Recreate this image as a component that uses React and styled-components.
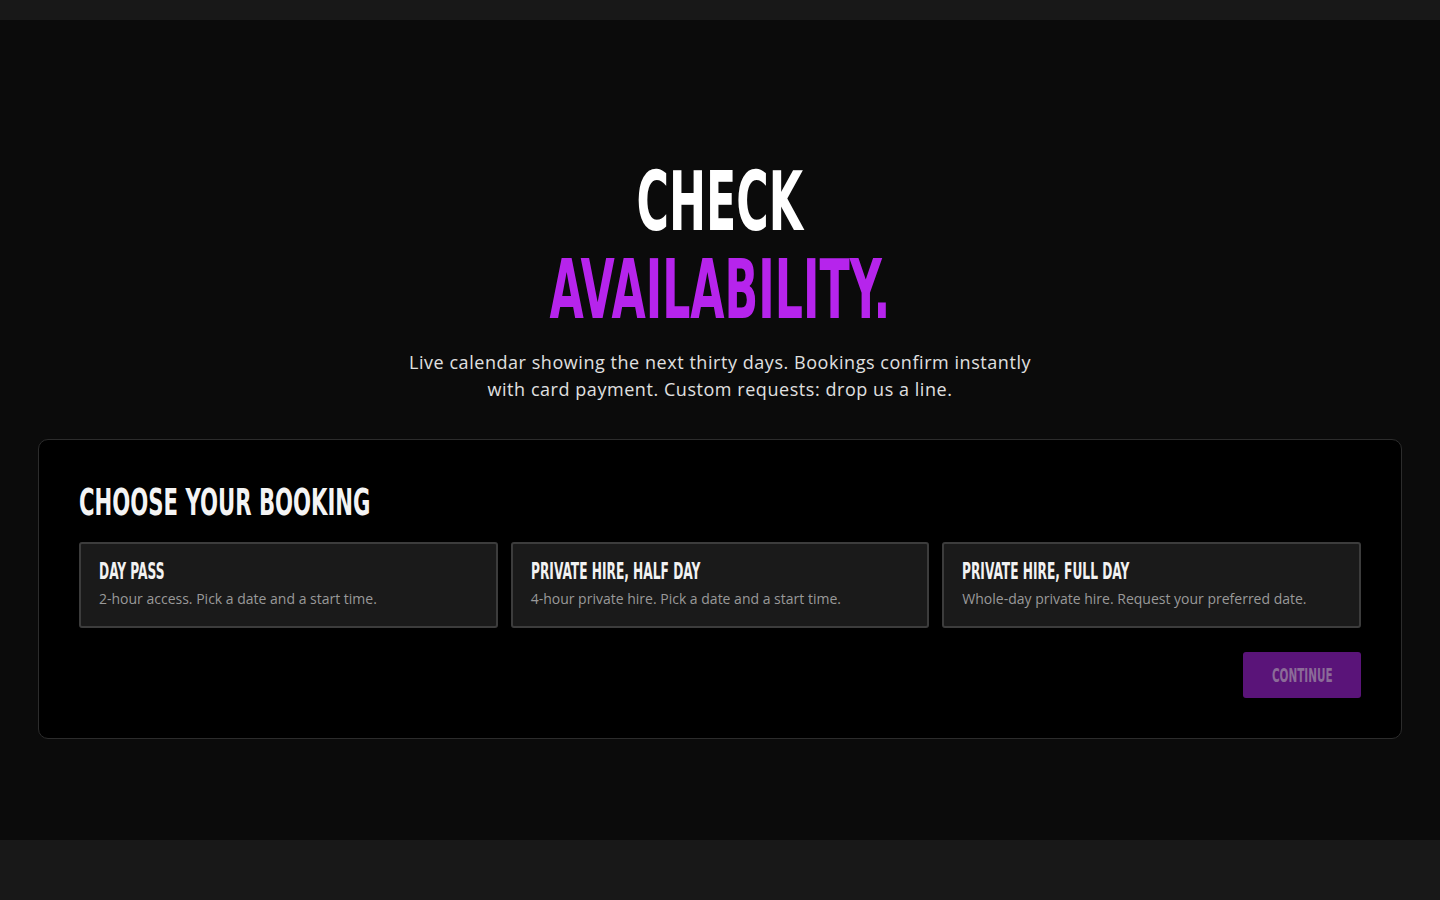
import styled, { createGlobalStyle } from "styled-components";

const Global = createGlobalStyle`
    html, body {
        margin: 0;
        padding: 0;
        background-color: #181818;
    }
    body {
        font-family: "Open Sans", "Noto Sans", sans-serif;
        color: #e6e6e6;
    }
`

const Page = styled.div`
    padding-top: 20px;
    min-height: 900px;
    box-sizing: border-box;
`

const Seccion = styled.section`
    background-color: #0b0b0b;
    height: 820px;
    box-sizing: border-box;
    padding: 136px 38px 0;
    display: flex;
    flex-direction: column;
    align-items: center;
`

// narrow display face, squeezed to get the tall condensed look
const Display = styled.span`
    display: inline-block;
    font-family: "Liberation Sans Narrow", "DejaVu Sans Condensed", sans-serif;
    font-weight: 700;
    text-transform: uppercase;
    white-space: nowrap;
    transform: scaleX(${p => p.$squeeze || 0.6});
    transform-origin: ${p => p.$origin || "left"} center;
`

const Titulo = styled.h1`
    margin: 0;
    text-align: center;
    font-size: 82px;
    line-height: 84px;
    font-weight: 700;
    color: #ffffff;
`

const Linea = styled.div`
    color: ${p => p.$color || "#ffffff"};
`

const Bajada = styled.p`
    margin: 17px 0 0;
    max-width: 650px;
    text-align: center;
    font-size: 18px;
    line-height: 27px;
    letter-spacing: 0.55px;
    font-weight: 400;
    color: #e0e0e0;
`

const Tarjeta = styled.div`
    margin-top: 36px;
    width: 100%;
    box-sizing: border-box;
    background-color: #000000;
    border: 1px solid #2c2c2c;
    border-radius: 10px;
    padding: 36px 40px 40px;
    display: flex;
    flex-direction: column;
`

const Encabezado = styled.h2`
    margin: 0;
    font-size: 38px;
    line-height: 48px;
    color: #f4f4f4;
`

const Opciones = styled.div`
    margin-top: 16px;
    display: grid;
    grid-template-columns: repeat(3, 1fr);
    gap: 13px;
`

const Opcion = styled.button`
    text-align: left;
    background-color: #1a1a1a;
    border: 2px solid #3c3c3c;
    border-radius: 3px;
    height: 86px;
    padding: 13px 18px 0;
    box-sizing: border-box;
    display: flex;
    flex-direction: column;
    gap: 6px;
    cursor: pointer;
    font-family: inherit;
`

const OpcionTitulo = styled.div`
    font-size: 23px;
    line-height: 26px;
    color: #f2f2f2;
`

const OpcionTexto = styled.div`
    font-size: 14px;
    line-height: 18px;
    color: #999999;
    white-space: nowrap;
`

const Acciones = styled.div`
    margin-top: 24px;
    display: flex;
    justify-content: flex-end;
`

const Continuar = styled.button`
    width: 118px;
    height: 46px;
    border: none;
    border-radius: 3px;
    background-color: #5a1479;
    color: #8b6b98;
    font-size: 20px;
    display: flex;
    align-items: center;
    justify-content: center;
    cursor: not-allowed;
    padding: 0;
`

const opciones = [
    { titulo: "Day Pass", texto: "2-hour access. Pick a date and a start time." },
    { titulo: "Private Hire, Half Day", texto: "4-hour private hire. Pick a date and a start time." },
    { titulo: "Private Hire, Full Day", texto: "Whole-day private hire. Request your preferred date." },
]

const App = () => {
    return (
        <Page>
            <Global />
            <Seccion>
                <Titulo>
                    <Linea><Display $origin="center">Check</Display></Linea>
                    <Linea $color="#b624ec"><Display $origin="center">Availability.</Display></Linea>
                </Titulo>
                <Bajada>
                    Live calendar showing the next thirty days. Bookings confirm instantly
                    with card payment. Custom requests: drop us a line.
                </Bajada>
                <Tarjeta>
                    <Encabezado><Display $squeeze={0.62}>Choose your booking</Display></Encabezado>
                    <Opciones>
                        {opciones.map(o => (
                            <Opcion key={o.titulo}>
                                <OpcionTitulo><Display $squeeze={0.59}>{o.titulo}</Display></OpcionTitulo>
                                <OpcionTexto>{o.texto}</OpcionTexto>
                            </Opcion>
                        ))}
                    </Opciones>
                    <Acciones>
                        <Continuar disabled><Display $origin="center" $squeeze={0.58}>Continue</Display></Continuar>
                    </Acciones>
                </Tarjeta>
            </Seccion>
        </Page>
    )
}

export default App
